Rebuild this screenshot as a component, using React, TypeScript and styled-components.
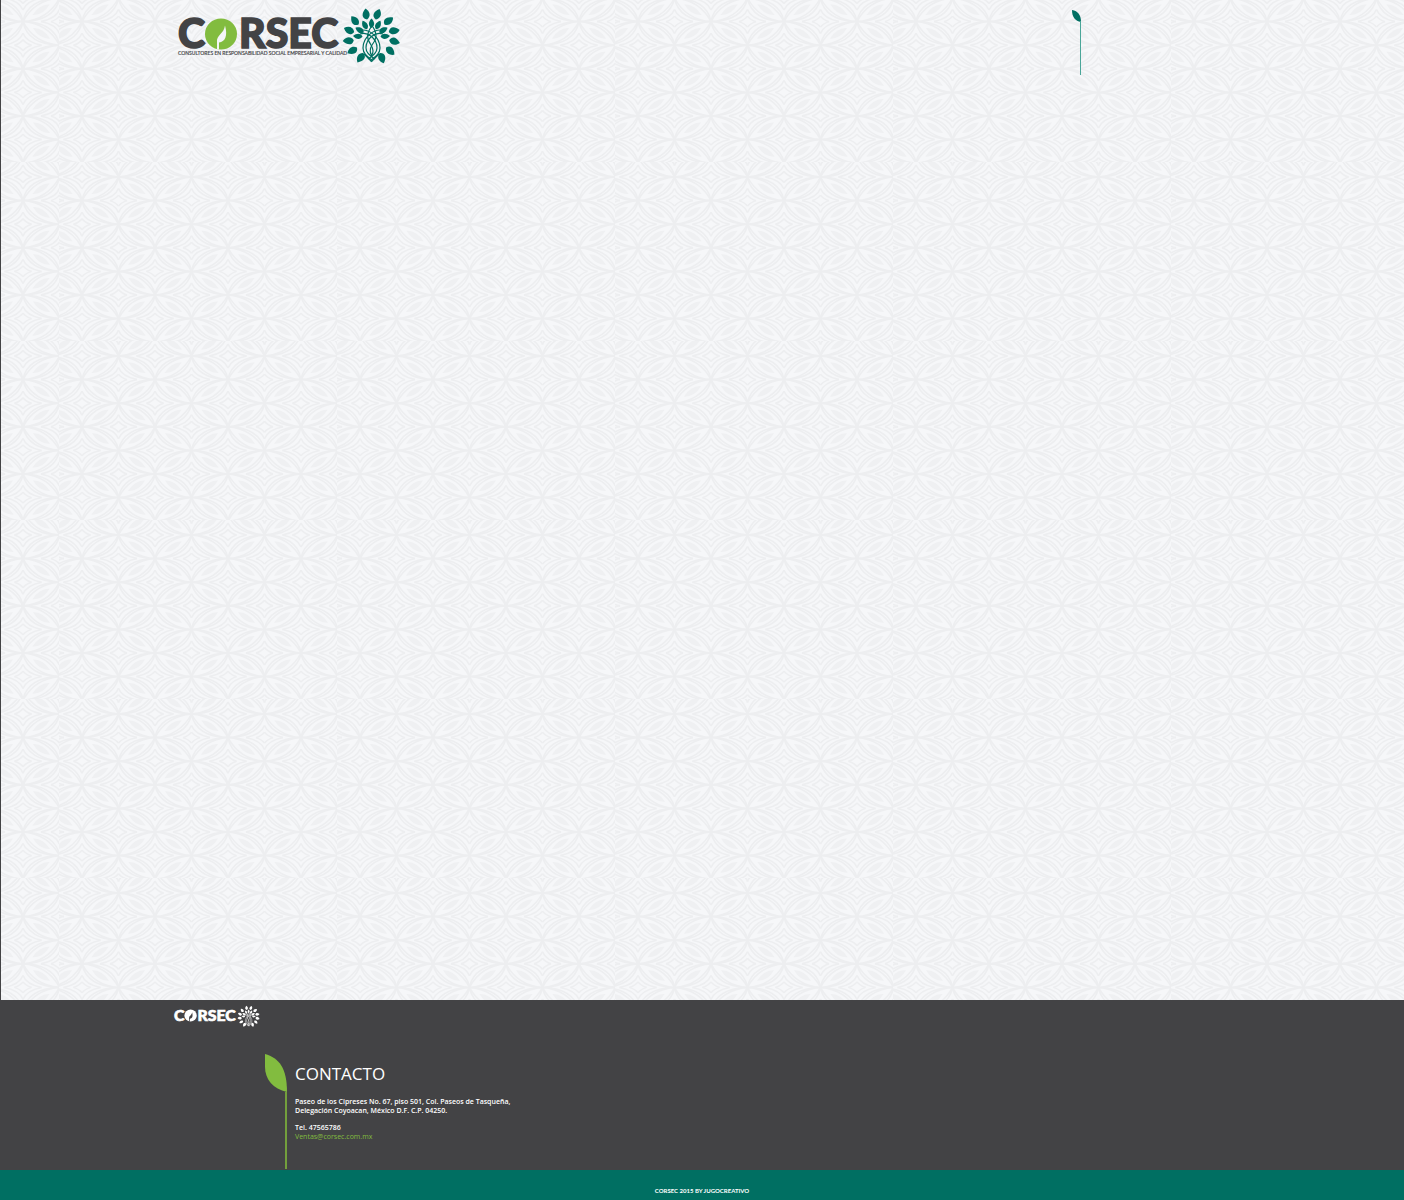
import React from "react";
import styled, { createGlobalStyle } from "styled-components";

const teal = "#006f62";
const green = "#82bc3f";
const dark = "#434345";

/* One cell of the ornament: a leaf on the diagonal with its echoes. */
const CELL_W = 36.5;
const CELL_H = 23.6;
const leafCore = "M10 6.500Q20 6 27 17Q16.500 17.600 10 6.500Z";
const leafEchoes = [
  "M0 0Q25 2 36.5 23.6Q11.5 21.6 0 0",
  "M1 0Q31 1 36.5 22.6M0 1Q5.5 22.6 35.5 23.6",
  "M18 0Q33 3 36.5 12M18.5 23.6Q3.5 20.6 0 11.6",
  "M28 0Q34 2 36.5 5.5M8.5 23.6Q2.5 21.6 0 18.1",
].join("");

const ornamentTile = () => {
  const cells: string[] = [];
  for (let row = -1; row < 8; row += 1) {
    for (let col = -1; col < 8; col += 1) {
      const x = 23 + col * CELL_W;
      const y = 15 + row * CELL_H;
      const mirrored = (row + col) % 2 === 0;
      cells.push(
        mirrored
          ? `<use href="#c" transform="translate(${x + CELL_W} ${y}) scale(-1 1)"/>`
          : `<use href="#c" transform="translate(${x} ${y})"/>`
      );
    }
  }
  const svg = `<svg xmlns="http://www.w3.org/2000/svg" width="278" height="179"><defs><g id="c"><path d="${leafEchoes}"/><path fill="#eff0f2" stroke="none" d="${leafCore}"/></g></defs><rect width="278" height="179" fill="#f6f7f9"/><g fill="none" stroke="#edeef0" stroke-width="1.5">${cells.join("")}</g></svg>`;
  const encoded = encodeURIComponent(svg).replace(/\(/g, "%28").replace(/\)/g, "%29");
  return `url("data:image/svg+xml,${encoded}")`;
};

const GlobalStyle = createGlobalStyle`
  body {
    margin: 0;
    background: ${dark};
    font-family: Lato, "Open Sans", sans-serif;
  }
`;

const Page = styled.div`
  display: flex;
  flex-direction: column;
  min-height: 100vh;
`;

const Stage = styled.main`
  flex: 1;
  margin-left: 1px;
  background-color: #f4f5f7;
  background-image: ${ornamentTile()};
  background-position: 58px 162px;
`;

const Container = styled.div`
  box-sizing: border-box;
  width: 100%;
  max-width: 1060px;
  margin: 0 auto;
`;

const HeaderBar = styled(Container).attrs({ as: "header" })`
  display: grid;
  grid-template-columns: 1fr 161px;
  padding: 10px 0 0 5px;
`;

const BrandLink = styled.a`
  display: block;
  width: max-content;
  text-decoration: none;
`;

const Drawing = styled.svg`
  display: block;
  overflow: visible;
`;

const Footer = styled.footer`
  background: ${dark};
  color: #fff;
`;

const FooterBody = styled(Container)`
  padding: 6px 2px 1px;
`;

const Contact = styled.section`
  display: flex;
  gap: 8px;
  margin: 27px 0 0 91px;
`;

const Stem = styled.div`
  display: flex;
  flex-direction: column;
  width: 22px;
  height: 115px;

  &::after {
    content: "";
    flex: 1;
    width: 2px;
    margin-left: auto;
    background: #739f3c;
  }
`;

const ContactTitle = styled.h2`
  margin: 9px 0 12px;
  font-family: "Open Sans", sans-serif;
  font-size: 17px;
  font-weight: 400;
  line-height: 22px;
`;

const Address = styled.address`
  font-family: "Open Sans", sans-serif;
  font-size: 7px;
  font-style: normal;
  font-weight: 600;
  line-height: 9px;
`;

const Line = styled.p`
  margin: 0 0 8px;
`;

const MailLink = styled.a`
  display: block;
  color: ${green};
  font-weight: 500;
  text-decoration: none;
`;

const Copyright = styled.div`
  box-sizing: border-box;
  height: 30px;
  padding-top: 16px;
  background: ${teal};
  font-size: 6px;
  font-weight: 700;
  line-height: 10px;
  text-align: center;
`;

const outerLeaves = [14, 46, 74, 100, 126, 153];
const innerLeaves = [29, 60, 87];
const bothSides = (angles: number[]) => [...angles, ...angles.map((a) => -a)];

const Tree = ({ color }: { color: string }) => (
  <g fill={color} stroke="none">
    {bothSides(outerLeaves).map((a) => (
      <path key={a} transform={`translate(28.5 27) rotate(${a})`} d="M0-18C-5-20-4.500-25 1-29C5-25 4.500-20 0-18Z" />
    ))}
    {[0, ...bothSides(innerLeaves)].map((a) => (
      <path key={`i${a}`} transform={`translate(28.5 27) rotate(${a})`} d="M0-9C-3.500-11-3.500-15 0-18.500C3.500-15 3.500-11 0-9Z" />
    ))}
    <g fill="none" stroke={color} strokeWidth="1.2">
      <path d="M15 21C25 17 37 27 37 38C37 44 32 47 27 51" />
      <path d="M17 24C25 21 34 29 34 38C34 43 30 46 25 49" />
      <path d="M42 21C32 17 20 27 20 38C20 44 25 47 30 51" />
      <path d="M40 24C32 21 23 29 23 38C23 43 27 46 32 49" />
      <path d="M28 17C23 25 24 29 28 35C31 40 30 44 28 46" />
      <path d="M30 17C35 25 33 30 29 35C26 40 27 43 29 46" />
      <path d="M21 44L28.500 51.500L36 44" />
    </g>
  </g>
);

type LogoProps = {
  width: number;
  height: number;
  ink: string;
  seed: string;
  sprout: string;
  tree: string;
  tagline?: boolean;
};

const Logo = ({ width, height, ink, seed, sprout, tree, tagline }: LogoProps) => (
  <Drawing width={width} height={height} viewBox="0 0 223 53" role="img" aria-label="CORSEC">
    <g fill={ink} stroke={ink} strokeWidth="1.6" fontFamily="Lato, sans-serif" fontWeight="900" fontSize="41">
      <text x="0" y="38">C</text>
      <text x="61" y="38">RSEC</text>
    </g>
    <ellipse cx="43" cy="24" rx="16" ry="15.5" fill={seed} />
    <path d="M39 39.500V32C38 25 46 24 47 15.500C50 26 47 32 41 32.500V39.500Z" fill={sprout} />
    {tagline && (
      <text x="0" y="45" fill={ink} stroke={ink} strokeWidth="0.15" fontFamily="Lato, sans-serif" fontWeight="400" fontSize="5">
        CONSULTORES EN RESPONSABILIDAD SOCIAL EMPRESARIAL Y CALIDAD
      </text>
    )}
    <g transform="translate(165 0)">
      <Tree color={tree} />
    </g>
  </Drawing>
);

export default function App() {
  return (
    <>
      <GlobalStyle />
      <Page>
        <Stage>
          <HeaderBar>
            <BrandLink href="#inicio">
              <Logo width={223} height={53} ink={dark} seed={green} sprout="#f4f5f7" tree={teal} tagline />
            </BrandLink>
            <Drawing width="10" height="65" viewBox="0 0 10 65" aria-hidden="true">
              <path d="M0 0C6 1 9 5 9 12C3 11 0 7 0 0Z" fill={teal} />
              <path d="M8 11H9V65H8Z" fill="#4aa699" />
            </Drawing>
          </HeaderBar>
        </Stage>
        <Footer>
          <FooterBody>
            <BrandLink href="#inicio">
              <Logo width={86} height={21} ink="#fff" seed="#fff" sprout={dark} tree="#fff" />
            </BrandLink>
            <Contact>
              <Stem>
                <Drawing width="22" height="38" viewBox="0 0 22 38" aria-hidden="true">
                  <path d="M0 0C14 4 22 14 22 38C8 35 0 25 0 13Z" fill={green} />
                </Drawing>
              </Stem>
              <div>
                <ContactTitle>CONTACTO</ContactTitle>
                <Address>
                  <Line>
                    Paseo de los Cipreses No. 67, piso 501, Col. Paseos de Tasqueña,
                    <br />
                    Delegación Coyoacan, México D.F. C.P. 04250.
                  </Line>
                  Tel. 47565786
                  <MailLink href="mailto:Ventas@corsec.com.mx">Ventas@corsec.com.mx</MailLink>
                </Address>
              </div>
            </Contact>
          </FooterBody>
          <Copyright>CORSEC 2015 BY JUGOCREATIVO</Copyright>
        </Footer>
      </Page>
    </>
  );
}
